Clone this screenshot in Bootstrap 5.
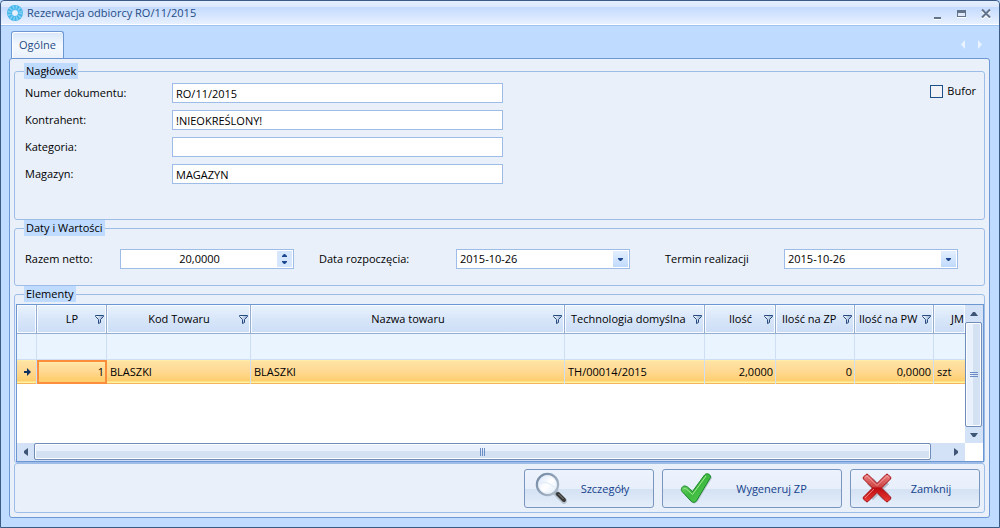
<!DOCTYPE html>
<html lang="pl">
<head>
<meta charset="utf-8">
<meta name="viewport" content="width=device-width, initial-scale=1">
<title>Rezerwacja odbiorcy RO/11/2015</title>
<link href="https://cdn.jsdelivr.net/npm/bootstrap@5.3.0/dist/css/bootstrap.min.css" rel="stylesheet">
<style>
  :root { --line: #9dbde8; --edge: #6c97d3; --steel: #7a96bf; --sky: #bfdbff; --pane: #e9f0fa; }
  body { background: var(--sky); color: #000; font: 11px/16px "Open Sans", "Noto Sans", sans-serif; }
  .window { min-height: 100vh; border: 1px solid #3b5a86; border-radius: 4px 4px 0 0; }
  .titlebar { height: 25px; padding: 0 7px 0 6px; color: #1e4b85; border-bottom: 1px solid #9fc1f3; box-shadow: inset 0 -1px #fff; border-radius: 4px 4px 0 0;
    background: linear-gradient(#e4eefe 0, #dbe8fd 6px, #c3dafe 6px, #eaf2ff 24px); }
  .winbtn { border: 0; background: none; padding: 0; width: 13px; height: 13px; line-height: 0; }
  .tabrow { height: 32px; padding: 0 14px 0 10px; }
  .tabrow .nav-link { height: 28px; width: 53px; margin-bottom: -1px; padding: 5px 0; text-align: center; line-height: 16px; color: #1e4b85; border: 1px solid var(--edge);
    border-bottom: 0; border-radius: 3px 3px 0 0; background: linear-gradient(#d9e7f9, #f4f9ff 50%, #e9f0fa); box-shadow: inset 1px 1px #fff; }
  .pane { margin: 0 9px 9px 8px; padding: 4px; border: 1px solid var(--edge); border-radius: 3px; background: var(--pane); }
  fieldset { border: 1px solid var(--line); border-radius: 3px; }
  legend { float: none; width: auto; margin: 0 0 0 9px; padding: 0 2px; font-size: 11px; line-height: 16px; background: var(--sky); }
  .field { height: 20px; min-height: 0; padding: 0 3px; border: 1px solid var(--line); border-radius: 0; background-color: #fff; color: #000; font-size: 11px; line-height: 18px; }
  .header-box { padding: 4px 8px 35px 10px; }
  .header-grid { display: grid; width: 100%; grid-template-columns: 147px minmax(0, 37%); row-gap: 7px; flex: 1; align-items: center; }
  .header-grid .field { width: 331px; max-width: 100%; }
  .form-check-input.tick { width: 13px; height: 13px; margin: 0; border: 1px solid #1c5189; border-radius: 0; background-color: #f1f3f7; }
  .dates-grid { display: grid; grid-template-columns: 95px 1fr 162px 1fr 154px 1fr; align-items: center; padding: 13px 26px 16px 10px; }
  .dates-grid .field { width: 100%; }
  .lead-in { padding-left: 25px; }
  .lead-in-wide { padding-left: 35px; }
  select.field { appearance: none; background: #fff url("data:image/svg+xml,%3Csvg xmlns='http://www.w3.org/2000/svg' width='15' height='16'%3E%3Cdefs%3E%3ClinearGradient id='g' x2='0' y2='1'%3E%3Cstop stop-color='%23e3efff'/%3E%3Cstop offset='1' stop-color='%23c0dafc'/%3E%3C/linearGradient%3E%3C/defs%3E%3Cpath fill='url(%23g)' d='M0 0h15v16H0z'/%3E%3Cpath fill='%231d478f' d='M5 7h5v1L8 10H7L5 8z'/%3E%3C/svg%3E") no-repeat right 1px center; }
  .spin { border: 1px solid var(--line); background: #fff; height: 20px; padding: 1px; }
  .spin .field { border: 0; height: 16px; line-height: 16px; }
  .spin button { display: block; width: 15px; height: 8px; border: 0; padding: 0; line-height: 0; background: #d5e6fd; }
  .gridbox { display: grid; grid-template-columns: minmax(0, 1fr) 18px; grid-template-rows: 138px 18px; margin: 2px 0 0 1px; border: 1px solid var(--edge); background: #fff; }
  .items { width: 100%; align-self: start; table-layout: fixed; border-collapse: separate; border-spacing: 0; white-space: nowrap; }
  .items th { height: 29px; padding: 0 2px 0 6px; font-weight: 400; border-right: 1px solid #93acd0; border-bottom: 1px solid #93acd0; background: linear-gradient(#eaf3ff, #d8e6f9 50%, #cbddf6); box-shadow: inset 1px 1px #f8fbff, inset -1px -1px #f8fbff; }
  .items th.mid { padding-left: 12px; }
  .items th.tight { padding-left: 4px; }
  .items td { border-right: 1px solid #cfdff3; overflow: hidden; }
  .items .filter td { height: 26px; background: #eaf4ff; border-bottom: 1px solid #cfdff3; padding: 0; }
  .items .picked td { height: 24px; padding: 0 2px 0 3px; background: linear-gradient(#fff0a8 0, #ffe2a2 2px, #ffd994 45%, #ffcf70 85%, #ffce6e 21px, #fff2a0 22px, #fff2a0 23px, #f5b55e 23px); }
  .items .picked .current { border: 2px solid #fb8e3d; padding-right: 1px; }
  .items th:last-child, .items td:last-child { border-right: 0; }
  .items .jm { padding: 0 0 0 17px; overflow: hidden; }
  .track { background: #cfdff5; }
  .track button { border: 0; padding: 0; background: #d3e2f6; line-height: 0; display: flex; align-items: center; justify-content: center; }
  .thumb { border: 1px solid #6f8db9; border-radius: 2px; box-shadow: inset 0 0 0 1px #fff; color: #6b8fc4; }
  .thumb-v { margin-right: 1px; background: linear-gradient(90deg, #e9f1fc 45%, #d3e1f3 45%); }
  .thumb-h { margin-bottom: 1px; background: linear-gradient(#e9f1fc 50%, #d3e1f3 50%); }
  .actions { border: 1px solid var(--line); border-radius: 3px; padding: 5px 4px 4px; }
  .act { width: 130px; height: 39px; padding: 0 10px; border: 1px solid var(--steel); border-radius: 3px; color: #15428b; font-size: 11px; line-height: 16px; background: linear-gradient(#edf3fd, #e7effa 50%, #d3e1f3 50%, #e5eefa); }
  .act svg { margin-bottom: 2px; }
  .act-wide { width: 180px; padding-left: 17px; }
</style>
</head>
<body>
<svg width="0" height="0" class="position-absolute" aria-hidden="true">
  <defs>
    <linearGradient id="fun" x2="1"><stop stop-color="#fff"/><stop offset="1" stop-color="#8ba9d2"/></linearGradient>
    <linearGradient id="green" x2="1" y2="1"><stop stop-color="#8be07e"/><stop offset=".5" stop-color="#3cb83e"/><stop offset="1" stop-color="#5ccf58"/></linearGradient>
    <linearGradient id="red" x2="0" y2="1"><stop stop-color="#e98282"/><stop offset=".45" stop-color="#d04646"/><stop offset=".5" stop-color="#bd0c12"/><stop offset="1" stop-color="#ea3c36"/></linearGradient>
    <linearGradient id="glass" x2="1" y2="1"><stop stop-color="#cfe0fb"/><stop offset=".5" stop-color="#fff"/><stop offset="1" stop-color="#dce8fc"/></linearGradient>
    <linearGradient id="rim" x2="1" y2="1"><stop stop-color="#6f87a3"/><stop offset="1" stop-color="#b3bfcd"/></linearGradient>
  </defs>
  <symbol id="funnel" viewBox="0 0 9 9"><path d="M.5.5h8v1L5.500 4.500v3l-2 1v-4l-3-3z" fill="url(#fun)" stroke="#274a80"/></symbol>
</svg>
<div class="window d-flex flex-column">
  <header class="titlebar d-flex align-items-center">
    <svg width="16" height="16" viewBox="0 0 16 16" aria-hidden="true"><circle cx="8" cy="8" r="5.500" fill="none" stroke="#45b5ea" stroke-width="5"/><circle cx="8" cy="8" r="5.500" fill="none" stroke="#7fd0f5" stroke-width="4" stroke-dasharray="1.400 1.480"/><circle cx="8" cy="8" r="2.500" fill="#e4f1fd"/></svg>
    <span class="flex-grow-1 ps-1">Rezerwacja odbiorcy RO/11/2015</span>
    <div class="d-flex">
      <button class="winbtn me-2" aria-label="Minimalizuj"><svg width="13" height="13"><path d="M1 10h7v2H1z" fill="#62738c"/><path d="M1 12h7v1H1z" fill="#fff"/></svg></button>
      <button class="winbtn me-2" aria-label="Maksymalizuj"><svg width="13" height="13"><path d="M3 3h9v7H3z" fill="#62738c"/><path d="M4 6h7v3H4z" fill="#dfe9fa"/><path d="M3 10h9v1H3z" fill="#fff"/></svg></button>
      <button class="winbtn ms-1" aria-label="Zamknij okno"><svg width="13" height="13"><path d="M3 4l8 8m0-8l-8 8" stroke="#fff" stroke-width="2"/><path d="M3 2.500l8 8m0-8l-8 8" stroke="#62738c" stroke-width="2"/></svg></button>
    </div>
  </header>
  <nav class="tabrow d-flex align-items-end justify-content-between">
    <a class="nav-link" href="#general">Ogólne</a>
    <svg class="mb-2" width="26" height="10" aria-hidden="true"><path d="M6 0v9L2 4.500zM19 0v9l4-4.500z" fill="#eaf3ff"/></svg>
  </nav>
  <main class="pane" id="general">
    <fieldset>
      <legend>Nagłówek</legend>
      <div class="header-box d-flex">
        <div class="header-grid">
          <label for="num">Numer dokumentu:</label><input id="num" class="field" value="RO/11/2015">
          <label for="kon">Kontrahent:</label><input id="kon" class="field" value="!NIEOKREŚLONY!">
          <label for="kat">Kategoria:</label><input id="kat" class="field">
          <label for="mag">Magazyn:</label><input id="mag" class="field" value="MAGAZYN">
        </div>
        <div class="d-flex align-items-center align-self-start">
          <input type="checkbox" class="form-check-input tick" id="buf"><label class="ps-1" for="buf">Bufor</label>
        </div>
      </div>
    </fieldset>
    <fieldset>
      <legend>Daty i Wartości</legend>
      <div class="dates-grid">
        <label for="net">Razem netto:</label>
        <div class="spin d-flex"><input id="net" class="field text-center" value="20,0000">
          <div><button aria-label="Więcej"><svg width="15" height="8"><path d="M5 6V5l2-2h1l2 2v1z" fill="#1d478f"/></svg></button><button aria-label="Mniej"><svg width="15" height="8"><path d="M5 2v1l2 2h1l2-2V2z" fill="#1d478f"/></svg></button></div></div>
        <label class="lead-in" for="start">Data rozpoczęcia:</label>
        <select id="start" class="field"><option>2015-10-26</option></select>
        <label class="lead-in-wide" for="end">Termin realizacji</label>
        <select id="end" class="field"><option>2015-10-26</option></select>
      </div>
    </fieldset>
    <fieldset>
      <legend>Elementy</legend>
      <div class="gridbox">
        <table class="items">
          <colgroup><col width="20"><col width="70"><col width="144"><col><col width="140"><col width="71"><col width="79"><col width="79"><col width="31"></colgroup>
          <thead><tr>
            <th></th>
            <th class="mid"><div class="d-flex align-items-center"><span class="flex-fill text-center">LP</span><svg width="9" height="9"><use href="#funnel"/></svg></div></th>
            <th class="mid"><div class="d-flex align-items-center"><span class="flex-fill text-center">Kod Towaru</span><svg width="9" height="9"><use href="#funnel"/></svg></div></th>
            <th class="mid"><div class="d-flex align-items-center"><span class="flex-fill text-center">Nazwa towaru</span><svg width="9" height="9"><use href="#funnel"/></svg></div></th>
            <th><div class="d-flex align-items-center"><span class="flex-fill">Technologia domyślna</span><svg width="9" height="9"><use href="#funnel"/></svg></div></th>
            <th class="mid"><div class="d-flex align-items-center"><span class="flex-fill text-center">Ilość</span><svg width="9" height="9"><use href="#funnel"/></svg></div></th>
            <th><div class="d-flex align-items-center"><span class="flex-fill">Ilość na ZP</span><svg width="9" height="9"><use href="#funnel"/></svg></div></th>
            <th class="tight"><div class="d-flex align-items-center"><span class="flex-fill">Ilość na PW</span><svg width="9" height="9"><use href="#funnel"/></svg></div></th>
            <th class="jm">JM</th>
          </tr></thead>
          <tbody>
            <tr class="filter"><td></td><td></td><td></td><td></td><td></td><td></td><td></td><td></td><td></td></tr>
            <tr class="picked"><td><svg class="d-block ms-1" width="8" height="8" aria-label="Bieżący wiersz"><path d="M0 3h3V0l4 4-4 4V5H0z" fill="#12305f"/></svg></td><td class="current text-end">1</td><td>BLASZKI</td><td>BLASZKI</td><td>TH/00014/2015</td><td class="text-end">2,0000</td><td class="text-end">0</td><td class="text-end">0,0000</td><td>szt</td></tr>
          </tbody>
        </table>
        <div class="track d-flex flex-column">
          <button style="height:17px" aria-label="W górę"><svg width="8" height="5"><path d="M0 5l3-4h2l3 4z" fill="#3f5576"/></svg></button>
          <div class="thumb thumb-v flex-grow-1 d-flex align-items-center justify-content-center"><svg width="8" height="6"><path d="M0 .5h8M0 2.500h8M0 4.500h8" stroke="currentColor"/></svg></div>
          <button style="height:16px" aria-label="W dół"><svg width="8" height="5"><path d="M0 0l3 4h2l3-4z" fill="#3f5576"/></svg></button>
        </div>
        <div class="track d-flex">
          <button style="width:17px" aria-label="W lewo"><svg width="5" height="8"><path d="M5 0L1 3v2l4 3z" fill="#3f5576"/></svg></button>
          <div class="thumb thumb-h flex-grow-1 d-flex align-items-center justify-content-center"><svg width="6" height="8"><path d="M.5 0v8M2.500 0v8M4.500 0v8" stroke="currentColor"/></svg></div>
          <button class="ps-3" style="width:34px" aria-label="W prawo"><svg width="5" height="8"><path d="M0 0l4 3v2L0 8z" fill="#3f5576"/></svg></button>
        </div>
      </div>
    </fieldset>
    <footer class="actions d-flex justify-content-end gap-2">
      <button class="act d-flex align-items-center">
        <svg width="32" height="32" viewBox="0 0 32 32" aria-hidden="true"><path d="M20 20l9 9" stroke="#b8c2ce" stroke-width="6" stroke-linecap="round"/><path d="M20 20l3 3" stroke="#8796a8" stroke-width="3"/><path d="M23 22l6 6" stroke="#393939" stroke-width="4" stroke-linecap="round"/><path d="M23.500 22l5 5" stroke="#8a8a8a"/><circle cx="12.500" cy="12.500" r="10.500" fill="url(#glass)" stroke="url(#rim)" stroke-width="2.500"/><circle cx="12.500" cy="12.500" r="9" fill="none" stroke="#e6edf6"/><path d="M5 12c4-4 10 0 14 3" stroke="#dce8fb" fill="none"/></svg>
        <span class="flex-fill text-center">Szczegóły</span></button>
      <button class="act act-wide d-flex align-items-center">
        <svg width="32" height="32" viewBox="0 0 32 32" aria-hidden="true"><path d="M3 19c1-3 5-4 7-1l3 4L26 4c2-2 6-1 6 2L18 29c-2 3-5 3-7 1l-8-9z" fill="#bac5d2"/><path d="M1.500 16.500c1-3 4-3 6-1.500l5 4.500L24.500 3C26.500.5 31 2 30.500 5.500L17 28c-1.500 3-4 3-6 1l-8.500-9c-1-1-1.500-2-1-3.500z" fill="url(#green)" stroke="#168526"/><path d="M3.500 17c1-1 2.500-.5 3.500.5l5.500 5L26 4" fill="none" stroke="#a5eb94"/></svg>
        <span class="flex-fill text-center">Wygeneruj ZP</span></button>
      <button class="act d-flex align-items-center">
        <svg width="32" height="32" viewBox="0 0 32 32" aria-hidden="true"><path d="M9 9l16 16M25 9L9 25" stroke="#b3bdca" stroke-width="8.500"/><path d="M8.500 7.500L24 24M24 7.500L8 25" stroke="#a51017" stroke-width="8.500" stroke-linecap="square" stroke-linejoin="round" fill="none" opacity="0"/><path d="M7 2.500l9 9 9-9q1-.8 2 0l2.500 2.500q.8 1 0 2L20.500 16l9 9q.8 1 0 2L27 29.500q-1 .8-2 0l-9-9-9 9q-1 .8-2 0L2.500 27q-.8-1 0-2l9-9-9-9q-.8-1 0-2L5 2.500q1-.8 2 0z" fill="url(#red)" stroke="#a51017"/><path d="M4 5.500L6 4l10 9.500L26 4l2 1.500M4 26l9-9" fill="none" stroke="#f5aaaa" stroke-opacity=".7"/></svg>
        <span class="flex-fill text-center">Zamknij</span></button>
    </footer>
  </main>
</div>
<script src="https://cdn.jsdelivr.net/npm/bootstrap@5.3.0/dist/js/bootstrap.bundle.min.js"></script>
</body>
</html>
